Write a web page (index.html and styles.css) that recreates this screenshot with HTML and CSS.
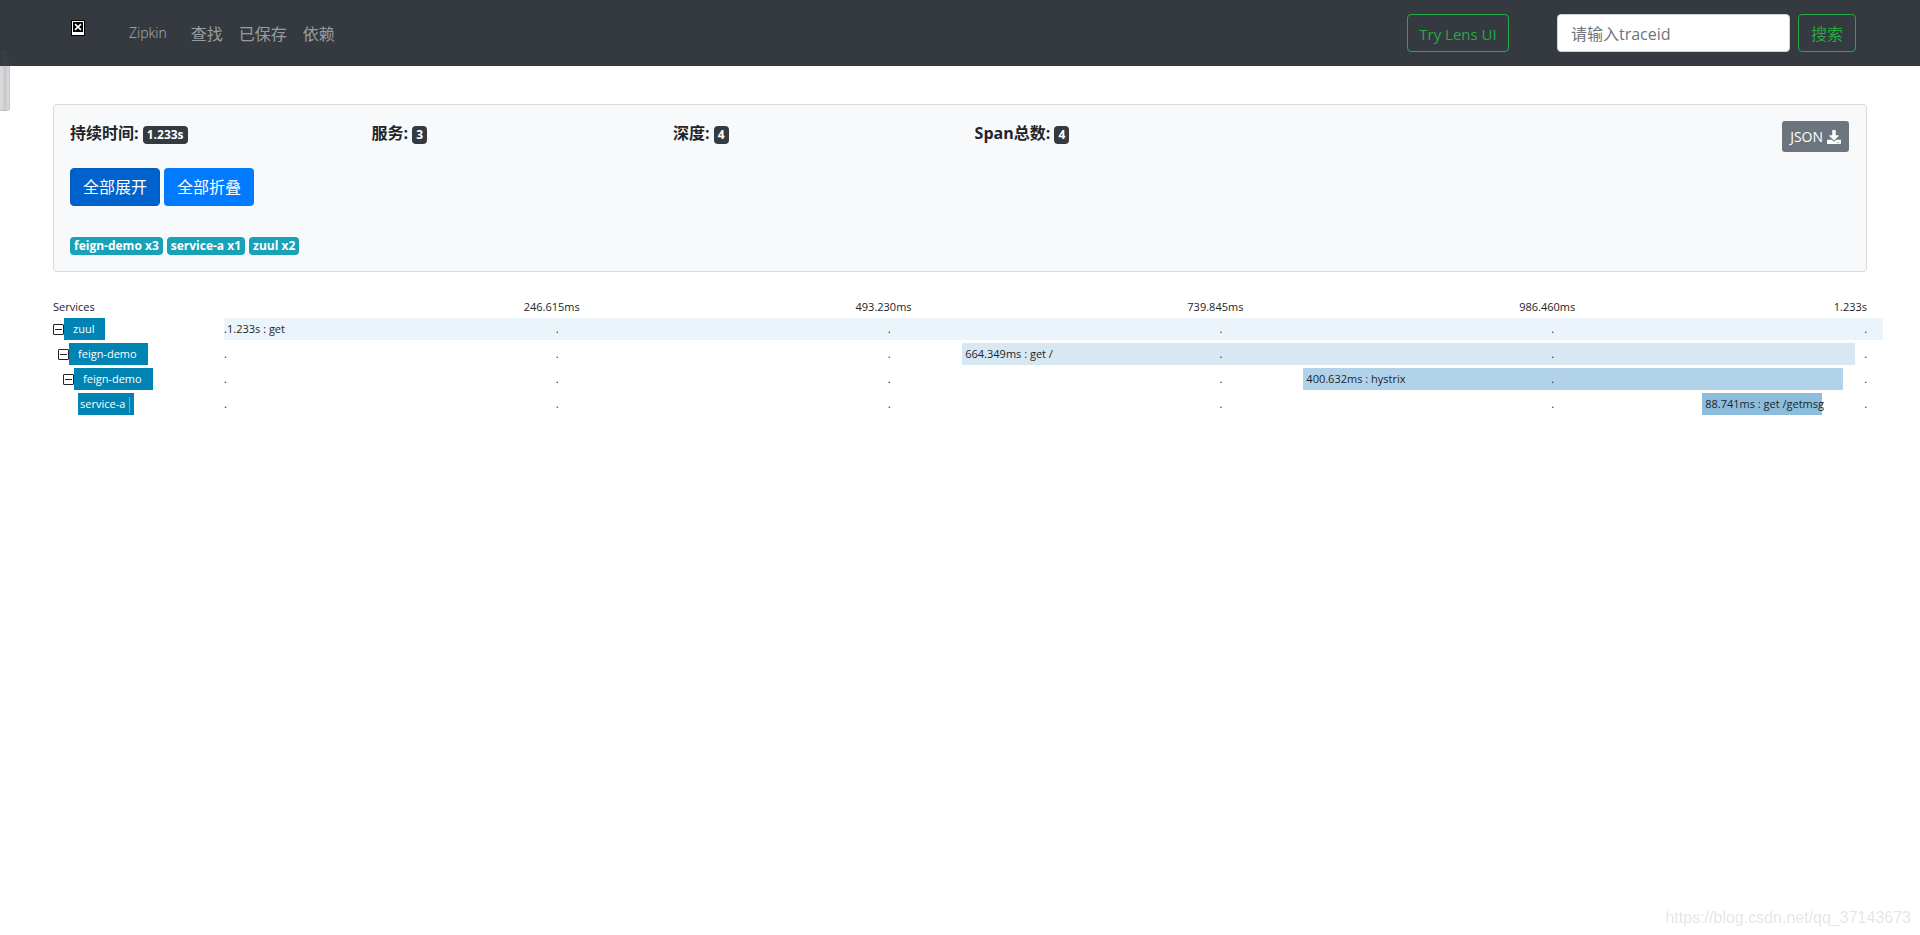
FILE: index.html
```html
<!DOCTYPE html>
<html lang="zh-CN">
<head>
<meta charset="utf-8">
<title>Zipkin</title>
<link rel="stylesheet" href="styles.css">
</head>
<body>
<nav class="navbar">
  <a class="logo" href="#" aria-label="Zipkin">
    <svg width="14" height="16" viewBox="0 0 14 16" aria-hidden="true"><path fill="#000" d="M0 0h14v16H0z"/><path fill="#fff" d="M1 1h12v14H1z"/><path fill="#000" d="M2 2h10v10H2z"/><path stroke="#fff" stroke-width="1.6" d="M4 4.2l6 5.6M10 4.2L4 9.800"/></svg>
  </a>
  <a class="brand" href="#">Zipkin</a>
  <a class="nav-link" href="#">查找</a>
  <a class="nav-link" href="#">已保存</a>
  <a class="nav-link" href="#">依赖</a>
  <form class="nav-form">
    <button class="btn btn-outline lens" type="button">Try Lens UI</button>
    <input class="trace-input" type="text" aria-label="traceid" placeholder="请输入traceid">
    <button class="btn btn-outline" type="button">搜索</button>
  </form>
</nav>
<div class="side-handle"></div>
<main class="content">
  <section class="summary">
    <div class="stats">
      <div>持续时间: <span class="badge">1.233s</span></div>
      <div>服务: <span class="badge">3</span></div>
      <div>深度: <span class="badge">4</span></div>
      <div>Span总数: <span class="badge">4</span></div>
      <button class="btn-json" type="button">JSON
        <svg width="14" height="14" viewBox="0 0 512 512" aria-hidden="true"><path fill="currentColor" d="M216 0h80c13 0 24 11 24 24v168h88c18 0 27 22 14 34L270 378c-7 8-20 8-27 0L90 226c-13-12-4-34 14-34h88V24c0-13 11-24 24-24zm296 376v112c0 13-11 24-24 24H24c-13 0-24-11-24-24V376c0-13 11-24 24-24h147l49 49c20 20 52 20 72 0l49-49h147c13 0 24 11 24 24zM388 464a20 20 0 1 0-40 0 20 20 0 0 0 40 0zm64 0a20 20 0 1 0-40 0 20 20 0 0 0 40 0z"/></svg>
      </button>
    </div>
    <div class="actions">
      <button class="btn btn-primary active" type="button">全部展开</button>
      <button class="btn btn-primary" type="button">全部折叠</button>
    </div>
    <div class="services">
      <span class="badge info">feign-demo x3</span>
      <span class="badge info">service-a x1</span>
      <span class="badge info">zuul x2</span>
    </div>
  </section>
  <section class="trace">
    <div class="trace-row head">
      <div>Services</div>
      <div class="timeline ticks"><span>246.615ms</span><span>493.230ms</span><span>739.845ms</span><span>986.460ms</span><span>1.233s</span></div>
    </div>
    <div class="trace-row">
      <div class="service depth-1"><button class="toggle" type="button" aria-label="折叠 zuul"></button><span class="name">zuul</span></div>
      <div class="timeline dots"><div class="bar tone-1" style="left:0%;width:100%">1.233s : get</div><i>.</i><i>.</i><i>.</i><i>.</i><i>.</i><i>.</i></div>
    </div>
    <div class="trace-row">
      <div class="service depth-2"><button class="toggle" type="button" aria-label="折叠 feign-demo"></button><span class="name">feign-demo</span></div>
      <div class="timeline dots"><div class="bar tone-2" style="left:44.5%;width:53.8%">664.349ms : get /</div><i>.</i><i>.</i><i>.</i><i>.</i><i>.</i><i>.</i></div>
    </div>
    <div class="trace-row">
      <div class="service depth-3"><button class="toggle" type="button" aria-label="折叠 feign-demo"></button><span class="name">feign-demo</span></div>
      <div class="timeline dots"><div class="bar tone-3" style="left:65.06%;width:32.5%">400.632ms : hystrix</div><i>.</i><i>.</i><i>.</i><i>.</i><i>.</i><i>.</i></div>
    </div>
    <div class="trace-row">
      <div class="service depth-4"><span class="name leaf">service-a</span></div>
      <div class="timeline dots"><div class="bar tone-4" style="left:89.1%;width:7.2%">88.741ms : get /getmsg</div><i>.</i><i>.</i><i>.</i><i>.</i><i>.</i><i>.</i></div>
    </div>
  </section>
</main>
<div class="watermark">https://blog.csdn.net/qq_37143673</div>
</body>
</html>
```
FILE: styles.css
```css
* { box-sizing: border-box; }
body {
  margin: 0;
  background: #fff;
  color: #212529;
  font: 16px/24px "Open Sans", "Noto Sans CJK SC", sans-serif;
}
button, input { font: inherit; margin: 0; }
a { text-decoration: none; }

.navbar {
  display: flex;
  align-items: center;
  height: 66px;
  padding: 0 64px 0 71px;
  background: #343a40;
}
.logo { display: flex; margin: 0 44px 10px 0; }
.brand {
  margin-right: 24px;
  color: rgba(255, 255, 255, .6);
  font-size: 14px;
  font-weight: 300;
}
.nav-link { margin-right: 16px; padding-top: 2px; color: rgba(255, 255, 255, .5); }
.nav-form { display: flex; margin-left: auto; }

.btn {
  height: 38px;
  padding: 0 12px;
  border: 1px solid transparent;
  border-radius: 4px;
  white-space: nowrap;
}
.btn-outline { padding-top: 2px; border-color: #28a745; background: transparent; color: #28a745; }
.lens { width: 102px; margin-right: 48px; padding: 2px 0 0; font-size: 15px; }
.trace-input {
  width: 233px;
  height: 38px;
  margin-right: 8px;
  padding: 2px 13px 0;
  border: 1px solid #ced4da;
  border-radius: 4px;
  background: #fff;
}
.trace-input::placeholder { color: #6c757d; opacity: 1; }

.side-handle {
  position: absolute;
  top: 51px;
  left: 0;
  width: 10px;
  height: 60px;
  border: 1px solid rgba(80, 80, 85, .15);
  border-left: 0;
  border-radius: 0 3px 3px 0;
  background: linear-gradient(90deg, transparent 3px, rgba(80, 90, 120, .1) 3px, rgba(80, 90, 120, .1) 7px, transparent 7px), rgba(60, 60, 65, .2);
}

.content { padding: 38px 53px 0; }
.summary {
  padding: 16px 17px 16px 16px;
  border: 1px solid #d8dadc;
  border-radius: 4px;
  background: #f8f9fb;
}
.stats {
  display: grid;
  grid-template-columns: repeat(4, 16.95%) 1fr;
  align-items: start;
  height: 47px;
  font-weight: 700;
}
.badge {
  display: inline-block;
  height: 18px;
  padding: 0 4px;
  border-radius: 4px;
  background: #343a40;
  color: #fff;
  font-size: 12px;
  font-weight: 700;
  line-height: 18px;
}
.btn-json {
  justify-self: end;
  display: flex;
  align-items: center;
  gap: 4px;
  height: 31px;
  padding: 0 8px;
  border: 0;
  border-radius: 3px;
  background: #6c757d;
  color: #fff;
  font-size: 14px;
  font-weight: 400;
}
.actions { display: flex; gap: 4px; }
.btn-primary { background: #007bff; color: #fff; }
.btn-primary.active { background: #0062cc; border-color: #005cbf; }
.services { display: flex; gap: 4px; margin-top: 31px; }
.info { background: #17a2b8; }

.trace { margin-top: 24px; font-size: 11px; line-height: 22px; }
.trace-row {
  display: grid;
  grid-template-columns: 171px 1fr;
  margin-bottom: 3px;
}
.trace-row.head { margin-bottom: 0; }
.timeline {
  position: relative;
  display: flex;
  margin-right: -16px;
}
.ticks { padding-left: 24px; }
.ticks span { flex: 0 0 calc((100% + 24px) / 5); text-align: right; }
.ticks span:last-child { flex: 1; padding-right: 16px; }
.dots i { flex: 1 1 0; min-width: 0; font-style: normal; z-index: 1; }
.dots i:last-child { flex: 0 0 auto; margin-left: -19px; margin-right: 16px; }
.bar {
  position: absolute;
  top: 0;
  height: 22px;
  padding-left: 3px;
  white-space: nowrap;
}
.tone-1 { background: #ebf3fb; }
.tone-2 { background: #d8e8f3; }
.tone-3 { background: #b1d2e8; }
.tone-4 { background: #8dbddc; }

.service { display: flex; align-items: center; height: 22px; }
.depth-2 { padding-left: 5px; }
.depth-3 { padding-left: 10px; }
.depth-4 { padding-left: 25px; }
.toggle {
  width: 11px;
  height: 11px;
  padding: 0;
  border: 1px solid #212529;
  border-radius: 1px;
  background: linear-gradient(#212529, #212529) center / 7px 1px no-repeat #fff;
}
.name { padding: 0 11px 0 9px; background: #0084b4; color: #fff; }
.name.leaf { padding: 0 4px 0 2px; }
.leaf::after {
  content: "";
  display: inline-block;
  width: 1px;
  height: 16px;
  margin-left: 4px;
  background: #ff7f50;
  vertical-align: middle;
}

.watermark {
  position: fixed;
  right: 9px;
  bottom: 7px;
  color: #e6e6e6;
  font: 16px/20px "Liberation Sans", Arial, sans-serif;
}
```
